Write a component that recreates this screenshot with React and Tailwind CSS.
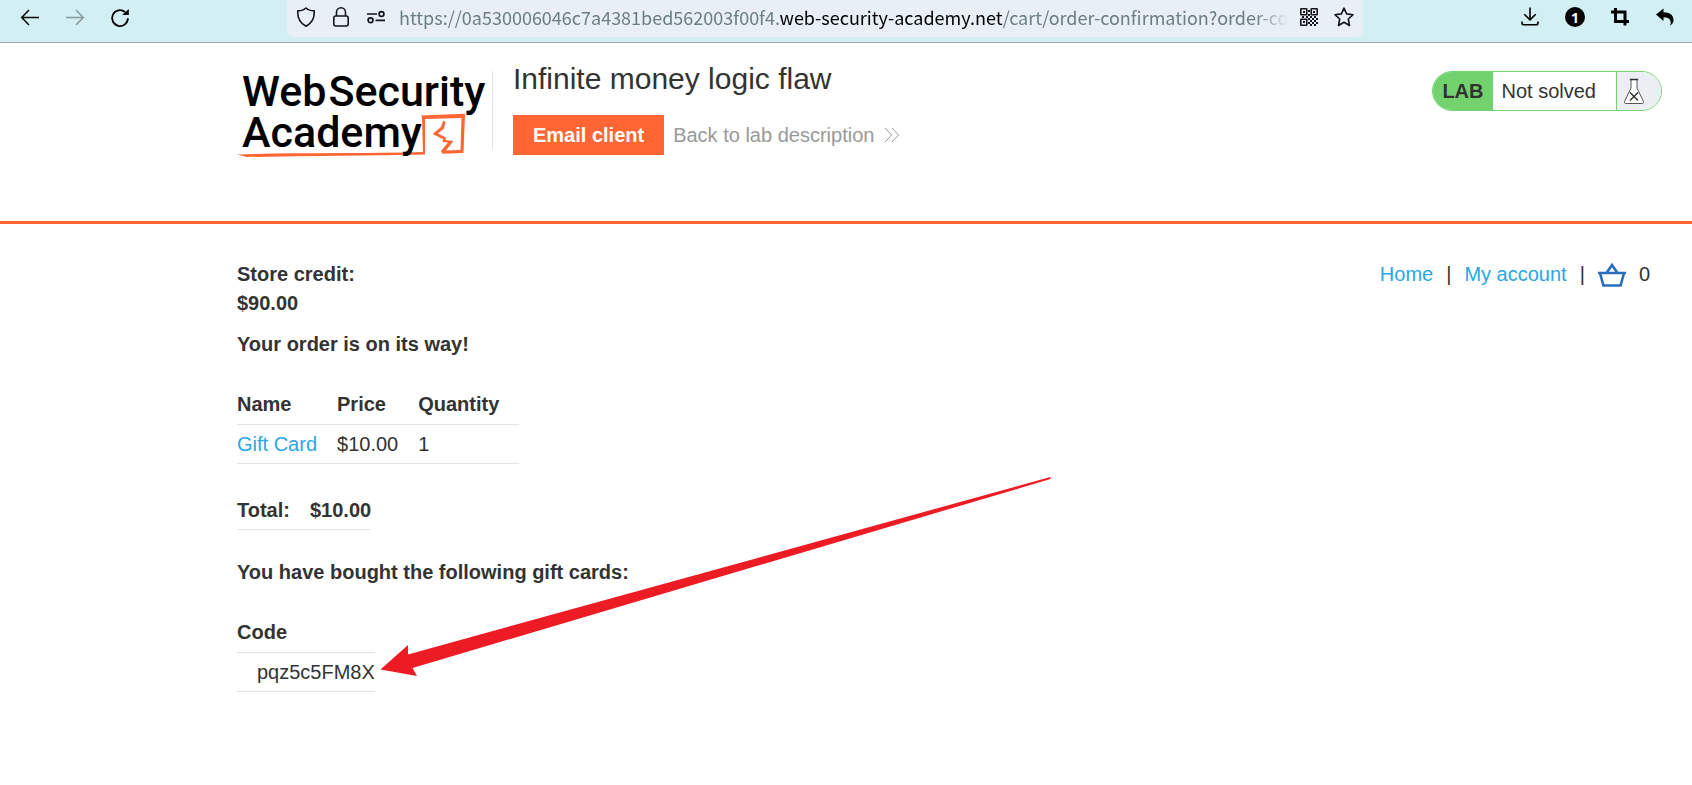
import React from "react";

const svgBase = { fill: "none", "aria-hidden": true };

function BackIcon() {
  return (
    <svg {...svgBase} className="h-5 w-5" viewBox="0 0 20 20" stroke="currentColor" strokeWidth="1.5">
      <path d="M19 9.500H2M9 2L1.700 9.500L9 17" />
    </svg>
  );
}

function ForwardIcon() {
  return (
    <svg {...svgBase} className="h-5 w-5" viewBox="0 0 20 20" stroke="currentColor" strokeWidth="1.500">
      <path d="M1 9.500H18M11 2L18.300 9.500L11 17" />
    </svg>
  );
}

function ReloadIcon() {
  return (
    <svg {...svgBase} className="h-5 w-5" viewBox="0 0 20 20">
      <path d="M17.900 10.200A7.900 7.900 0 1 1 15 4" stroke="currentColor" strokeWidth="1.800" />
      <path d="M18.800 1V7H12.200Z" fill="currentColor" />
    </svg>
  );
}

function ShieldIcon() {
  return (
    <svg {...svgBase} className="h-5 w-5" viewBox="0 0 20 20" stroke="currentColor" strokeWidth="1.600" strokeLinejoin="round">
      <path d="M10 1C8 3 5 3.800 1.800 3.900C1.300 11 4 16 10 19.300C16 16 18.700 11 18.200 3.900C15 3.800 12 3 10 1Z" />
    </svg>
  );
}

function LockIcon() {
  return (
    <svg {...svgBase} className="h-5 w-5" viewBox="0 0 20 20" stroke="currentColor" strokeWidth="1.600">
      <rect x="2.800" y="9" width="14.400" height="10" rx="2" />
      <path d="M5.500 9V5.300A4.500 4.500 0 0 1 14.500 5.300V9" />
    </svg>
  );
}

function PermissionsIcon() {
  return (
    <svg {...svgBase} className="h-5 w-5" viewBox="0 0 20 20" stroke="currentColor" strokeWidth="1.700">
      <path d="M1 7H11M9.500 13.300H19" />
      <circle cx="15.500" cy="7" r="2.400" />
      <circle cx="4.500" cy="13.300" r="2.400" />
    </svg>
  );
}

function QrIcon() {
  return (
    <svg {...svgBase} className="h-5 w-5" viewBox="0 0 20 20">
      <g stroke="currentColor" strokeWidth="1.600">
        <rect x="1.800" y="1.800" width="6" height="6" rx="0.500" />
        <rect x="12.200" y="1.800" width="6" height="6" rx="0.500" />
        <rect x="1.800" y="12.200" width="6" height="6" rx="0.500" />
      </g>
      <path
        fill="currentColor"
        d="M4 4h2v2H4zM14 4h2v2h-2zM4 14h2v2H4zM9 3h2v2H9zM9 7h2v2H9zM3 9h2v2H3zM7 9h2v2H7zM9 11h2v2H9zM11 9h2v2h-2zM15 9h2v2h-2zM13 11h2v2h-2zM17 11h2v2h-2zM11 13h2v2h-2zM15 13h2v2h-2zM9 15h2v2H9zM13 15h2v2h-2zM17 15h2v2h-2zM11 17h2v2h-2zM15 17h2v2h-2z"
      />
    </svg>
  );
}

function StarIcon() {
  return (
    <svg {...svgBase} className="h-5 w-5" viewBox="0 0 20 20" stroke="currentColor" strokeWidth="1.600" strokeLinejoin="round">
      <path d="M10 1.200L12.600 6.900L19 7.700L14.300 12L15.500 18.500L10 15.300L4.500 18.500L5.700 12L1 7.700L7.400 6.900Z" />
    </svg>
  );
}

function DownloadIcon() {
  return (
    <svg {...svgBase} className="h-5 w-5" viewBox="0 0 20 20" stroke="currentColor" strokeWidth="1.600">
      <path d="M10 0.500V12.700M4.300 7.200L10 12.900L15.700 7.200M2 14.500V15.700Q2 17.800 4 17.800H16Q18 17.800 18 15.700V14.500" />
    </svg>
  );
}

function CropIcon() {
  return (
    <svg {...svgBase} className="h-5 w-5" viewBox="0 0 20 20" stroke="currentColor" strokeWidth="3">
      <path d="M5.500 1V14.500H19M1 5H15V18.500" />
    </svg>
  );
}

function UndoIcon() {
  return (
    <svg {...svgBase} className="h-5 w-5" viewBox="0 0 20 20">
      <path
        fill="currentColor"
        d="M1 7.500L8.500 1.500V5.300C14.500 5.300 18.500 8 18.500 13C18.500 15.800 17 17.600 14.500 18.800C15.800 17.500 16 16.200 15.600 14.500C14.900 11.500 12.500 10.300 8.500 10.300V14Z"
      />
    </svg>
  );
}

function ChevronsIcon() {
  return (
    <svg {...svgBase} className="h-4 w-4" viewBox="0 0 16 16" stroke="currentColor" strokeWidth="1">
      <path d="M1 1L7.500 8L1 15M8 1L14.500 8L8 15" />
    </svg>
  );
}

function FlaskIcon() {
  return (
    <svg {...svgBase} className="h-[26px] w-5" viewBox="0 0 20 26" stroke="#333332">
      <path d="M7 1.500V10L0.700 23.200Q0 25.500 1.500 25.500H18.500Q20 25.500 19.300 23.200L13 10V1.500" fill="#fff" stroke="#555" strokeWidth="1" />
      <path d="M5.800 1.500H14.200" strokeWidth="1.600" />
      <path d="M6 14.500L14 22.500M14 14.500L6 22.500" strokeWidth="1.500" />
    </svg>
  );
}

function BasketIcon() {
  return (
    <svg {...svgBase} className="h-[26px] w-7" viewBox="0 0 28 26" stroke="#2a6ebb" strokeWidth="2.600">
      <path d="M0 11H28M2 11L5.400 23.500H22.600L26 11M8.500 11L14 3L19.500 11" />
    </svg>
  );
}

function IconButton({ label, className = "", children }) {
  return (
    <button type="button" aria-label={label} className={`flex h-5 w-5 shrink-0 items-center justify-center ${className}`}>
      {children}
    </button>
  );
}

function BrowserBar() {
  return (
    <div className="flex h-[43px] items-start border-b border-[#9cabb1] bg-[#d2eff3] text-black">
      <div className="flex w-[287px] shrink-0 gap-[25px] pt-2 pl-5">
        <IconButton label="Back">
          <BackIcon />
        </IconButton>
        <IconButton label="Forward" className="text-[#84999c]">
          <ForwardIcon />
        </IconButton>
        <IconButton label="Reload">
          <ReloadIcon />
        </IconButton>
      </div>
      <div className="flex h-[37px] min-w-0 flex-1 items-start rounded-b-md bg-[#e8eff6] pr-[9px] pl-[9px] text-[#15141a]">
        <div className="flex shrink-0 gap-[15px] pt-[7px]">
          <IconButton label="Tracking protection">
            <ShieldIcon />
          </IconButton>
          <IconButton label="Connection security">
            <LockIcon />
          </IconButton>
          <IconButton label="Site permissions">
            <PermissionsIcon />
          </IconButton>
        </div>
        <div className="ml-[13px] min-w-0 flex-1 overflow-hidden font-['Noto_Sans_CJK_SC','Noto_Sans',sans-serif] text-[18px] leading-[35px] whitespace-nowrap text-[#6b7f80] [mask-image:linear-gradient(to_left,transparent,black_32px)]">
          https://0a530006046c7a4381bed562003f00f4.<span className="text-black">web-security-academy.net</span>
          /cart/order-confirmation?order-confirmed=true
        </div>
        <div className="ml-[11px] flex shrink-0 gap-[15px] pt-[7px]">
          <IconButton label="QR code">
            <QrIcon />
          </IconButton>
          <IconButton label="Bookmark">
            <StarIcon />
          </IconButton>
        </div>
      </div>
      <div className="flex w-[329px] shrink-0 justify-end gap-[25px] pt-[7px] pr-[17px]">
        <IconButton label="Downloads">
          <DownloadIcon />
        </IconButton>
        <IconButton label="Tabs" className="rounded-full bg-black font-['Open_Sans',sans-serif] text-[14px] font-bold text-white">
          1
        </IconButton>
        <IconButton label="Screenshot">
          <CropIcon />
        </IconButton>
        <IconButton label="Undo">
          <UndoIcon />
        </IconButton>
      </div>
    </div>
  );
}

function Logo() {
  return (
    <a href="#academy" aria-label="Web Security Academy" className="relative block h-[90px] w-[254px] shrink-0 font-['Roboto',sans-serif] text-[43px] leading-[41px] font-medium text-black">
      <svg {...svgBase} className="absolute top-0 left-0 h-[90px] w-[254px]" viewBox="0 0 254 90">
        <path d="M0 83.500C60 81.500 130 82.500 186 81L185 46L184 44.500L228 42.800L226.500 82L205.500 82.800L204 80L211 71.500L205.500 71L206 68L195.500 63L204 56L206 50L208.500 50.500L207 57.500L201 62.500L209 66.500L208.500 69L216.500 70L209 79.500L223.500 79L224.500 47L188 48L188 83.500C130 84.500 70 85 10 86Z" fill="#ff6633" />
      </svg>
      <span className="relative flex gap-[2px] pl-[5px]">
        <span>Web</span>
        <span>Security</span>
      </span>
      <span className="relative block pl-[5px]">Academy</span>
    </a>
  );
}

function LabStatus() {
  return (
    <div className="flex h-10 shrink-0 items-stretch overflow-hidden rounded-full border border-[#72d470] text-[20px]">
      <span className="flex items-center bg-[#72d26e] pr-[9px] pl-[9px] font-bold">LAB</span>
      <span className="flex items-center border-r border-[#72d470] bg-white pr-5 pl-[9px]">Not solved</span>
      <span className="flex items-center bg-[#ebeff4] pr-[17px] pl-[7px]">
        <FlaskIcon />
      </span>
    </div>
  );
}

function LabHeader() {
  return (
    <header className="flex h-[181px] items-start border-b-3 border-[#ff6633] pt-[28px] pr-[30px] pl-[237px]">
      <Logo />
      <div className="ml-px h-[78px] min-w-0 flex-1 border-l border-[#e4e4e4] pl-5">
        <h1 className="-mt-2 text-[30px] leading-8">Infinite money logic flaw</h1>
        <div className="mt-5 flex items-center gap-[9px]">
          <button type="button" className="h-10 bg-[#ff6633] px-5 text-[20px] font-bold text-white">
            Email client
          </button>
          <a href="#lab" className="flex items-center gap-[10px] text-[20px] text-[#999]">
            Back to lab description
            <ChevronsIcon />
          </a>
        </div>
      </div>
      <LabStatus />
    </header>
  );
}

function Arrow() {
  return (
    <svg {...svgBase} className="pointer-events-none absolute top-[470px] left-[370px] h-[220px] w-[690px]" viewBox="0 0 690 220">
      <path d="M10.500 199.500L38 175L38 184.500L680.500 7L680.500 9L42.500 198L47 206Z" fill="#ed1c24" />
    </svg>
  );
}

export default function App() {
  return (
    <div className="relative min-h-screen bg-white font-['Liberation_Sans',Arial,sans-serif] text-[20px] leading-[29px] text-[#333332]">
      <BrowserBar />
      <LabHeader />
      <main className="pt-9 pr-[30px] pb-12 pl-[237px]">
        <div className="flex items-start justify-between">
          <p className="font-bold">
            Store credit:
            <br />
            $90.00
          </p>
          <nav className="flex items-center gap-[13px] pr-3">
            <a href="#home" className="text-[#29a7e4]">Home</a>
            <span>|</span>
            <a href="#account" className="text-[#29a7e4]">My account</a>
            <span>|</span>
            <a href="#cart" aria-label="Basket" className="flex items-center">
              <BasketIcon />
            </a>
            <span>0</span>
          </nav>
        </div>
        <h2 className="mt-3 font-bold">Your order is on its way!</h2>
        <table className="mt-[25px] text-left">
          <thead>
            <tr className="h-10 border-b border-[#e4e4e4]">
              <th className="pt-[2px] pr-5 font-bold">Name</th>
              <th className="pt-[2px] pr-5 font-bold">Price</th>
              <th className="pt-[2px] pr-5 font-bold">Quantity</th>
            </tr>
          </thead>
          <tbody>
            <tr className="h-[39px] border-b border-[#e4e4e4]">
              <td className="pt-[2px] pr-5">
                <a href="#gift-card" className="text-[#29a7e4]">Gift Card</a>
              </td>
              <td className="pt-[2px] pr-5">$10.00</td>
              <td className="pt-[2px] pr-5">1</td>
            </tr>
          </tbody>
        </table>
        <table className="mt-[27px] text-left">
          <tbody>
            <tr className="h-[39px] border-b border-[#e4e4e4]">
              <th className="pt-[2px] pr-5 font-bold">Total:</th>
              <th className="pt-[2px] font-bold">$10.00</th>
            </tr>
          </tbody>
        </table>
        <h2 className="mt-7 font-bold">You have bought the following gift cards:</h2>
        <table className="mt-[25px] text-left">
          <thead>
            <tr className="h-10 border-b border-[#e4e4e4]">
              <th className="pt-[2px] font-bold">Code</th>
            </tr>
          </thead>
          <tbody>
            <tr className="h-[39px] border-b border-[#e4e4e4]">
              <td className="pt-[2px] pl-5">pqz5c5FM8X</td>
            </tr>
          </tbody>
        </table>
      </main>
      <Arrow />
    </div>
  );
}
